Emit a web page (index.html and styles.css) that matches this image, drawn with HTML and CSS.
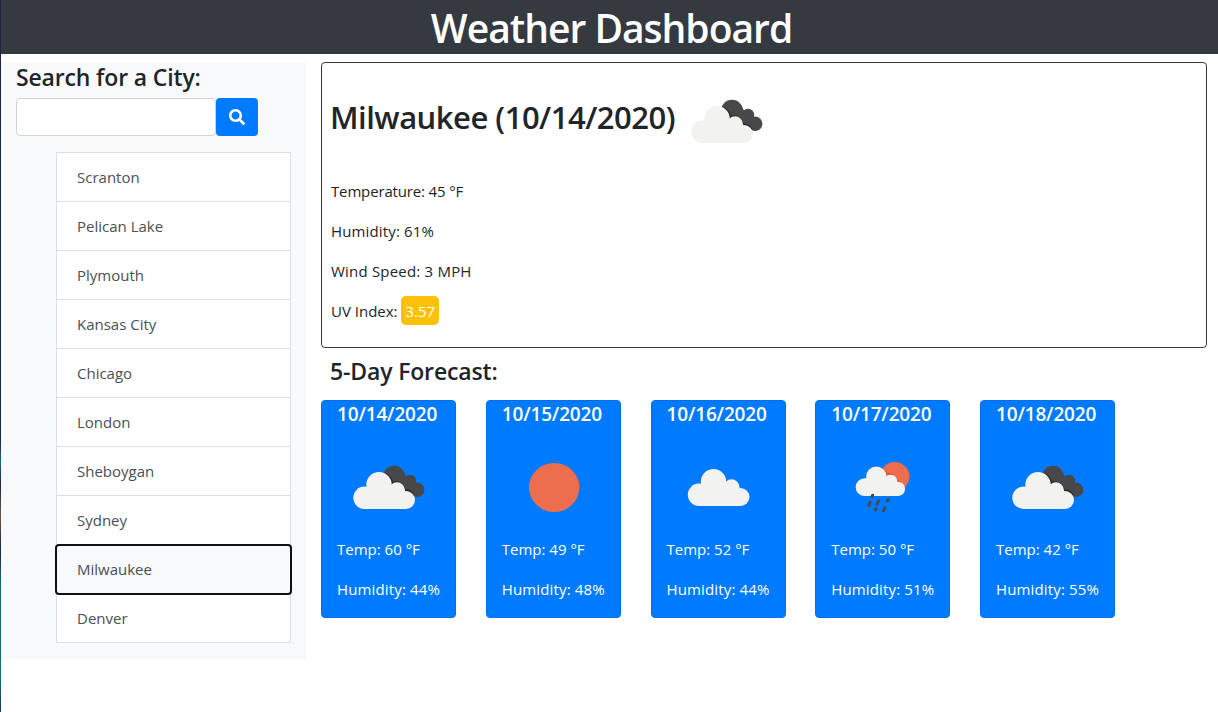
FILE: index.html
```html
<!DOCTYPE html>
<html lang="en">
<head>
<meta charset="utf-8">
<title>Weather Dashboard</title>
<link rel="stylesheet" href="styles.css">
</head>
<body>
<svg class="defs" width="0" height="0" aria-hidden="true">
  <defs>
    <g id="cloud">
      <circle cx="42" cy="47.7" r="12.7"/>
      <circle cx="27.5" cy="60.8" r="11.2"/>
      <circle cx="60" cy="53.3" r="8"/>
      <circle cx="69" cy="63" r="9"/>
      <path d="M27.5 72V50H60L69 60V72Z"/>
    </g>
    <g id="broken">
      <g fill="#48484a"><circle cx="57" cy="39.7" r="11"/><circle cx="73" cy="43.9" r="6.2"/><circle cx="80.2" cy="52.8" r="7.2"/><path d="M57 39L66 34.500L69 39.500L73 43L77 48L80 59.800L66 53Z"/></g>
      <path d="M48.5 36.500Q54 40 55.500 45.500Q65 43.500 68 53Q74 53 76.500 58" fill="none" stroke="#29292c" stroke-width="1.6"/>
      <use href="#cloud" fill="#f2f2f0"/>
    </g>
  </defs>
</svg>
<div class="page">
  <header class="header"><h1>Weather Dashboard</h1></header>
  <div class="row">
    <aside class="sidebar">
      <h4>Search for a City:</h4>
      <form class="search">
        <input type="text" aria-label="City">
        <button type="button" aria-label="Search"><svg width="16" height="16" viewBox="0 0 512 512"><path fill="#fff" d="M505 442.700L405.300 343c-4.500-4.500-10.600-7-17-7H372c27.600-35.300 44-79.700 44-128C416 93.100 322.900 0 208 0S0 93.100 0 208s93.100 208 208 208c48.300 0 92.700-16.400 128-44v16.300c0 6.400 2.500 12.500 7 17l99.700 99.700c9.400 9.400 24.600 9.400 33.900 0l28.300-28.300c9.400-9.400 9.400-24.600.100-34zM208 336c-70.700 0-128-57.200-128-128 0-70.700 57.200-128 128-128 70.700 0 128 57.200 128 128 0 70.700-57.200 128-128 128z"/></svg></button>
      </form>
      <ul class="cities">
        <li>Scranton</li>
        <li>Pelican Lake</li>
        <li>Plymouth</li>
        <li>Kansas City</li>
        <li>Chicago</li>
        <li>London</li>
        <li>Sheboygan</li>
        <li>Sydney</li>
        <li class="focused">Milwaukee</li>
        <li>Denver</li>
      </ul>
    </aside>
    <main class="main">
      <section class="current">
        <h2><span class="place">Milwaukee (10/14/2020)</span><svg class="icon" viewBox="0 0 100 100"><use href="#broken"/></svg></h2>
        <p class="temperature">Temperature: 45 °F</p>
        <p class="humidity">Humidity: 61%</p>
        <p class="wind">Wind Speed: 3 MPH</p>
        <p>UV Index: <span class="uv">3.57</span></p>
      </section>
      <h4 class="forecast-title">5-Day Forecast:</h4>
      <section class="forecast">
        <article class="day"><h5>10/14/2020</h5><svg class="icon" viewBox="0 0 100 100"><use href="#broken"/></svg><p>Temp: 60 °F</p><p class="humidity">Humidity: 44%</p></article>
        <article class="day"><h5>10/15/2020</h5><svg class="icon" viewBox="0 0 100 100"><ellipse cx="52.200" cy="50.500" rx="25.200" ry="24.500" fill="#ec6e4c"/></svg><p>Temp: 49 °F</p><p class="humidity">Humidity: 48%</p></article>
        <article class="day"><h5>10/16/2020</h5><svg class="icon" viewBox="0 0 100 100"><use href="#cloud" fill="#f2f2f0" transform="translate(4.500 -3)"/></svg><p>Temp: 52 °F</p><p class="humidity">Humidity: 44%</p></article>
        <article class="day"><h5>10/17/2020</h5><svg class="icon" viewBox="0 0 100 100"><g transform="translate(1 0)"><circle cx="62.700" cy="39.600" r="14.700" fill="#ec6e4c"/><path d="M53 36.500Q61 35 64 43.500Q69 44 71 49" fill="none" stroke="#e04e36" stroke-width="1.200"/><use href="#cloud" fill="#f2f2f0" transform="translate(10.700 1.500) scale(.8)"/><path d="M40.600 58.200l-.6 1.400M38 65.200l-1.200 3.200M46.500 63.800l-1.500 3.400M56 62.800l-.6 1.200M44 71.800l-.4 1M52.700 70.900l-1.200 2.900" stroke="#48484a" stroke-width="3" stroke-linecap="round"/></g></svg><p>Temp: 50 °F</p><p class="humidity">Humidity: 51%</p></article>
        <article class="day"><h5>10/18/2020</h5><svg class="icon" viewBox="0 0 100 100"><use href="#broken"/></svg><p>Temp: 42 °F</p><p class="humidity">Humidity: 55%</p></article>
      </section>
    </main>
  </div>
</div>
</body>
</html>
```
FILE: styles.css
```css
* { box-sizing: border-box; }
body {
  margin: 0;
  background: linear-gradient(#1d2545 0 440px, #176a77 462px, #1b2444 485px, #6e573f 515px, #1b2444 550px, #176a77 585px 680px, #1b3560 712px);
  font: 15px/24px "Open Sans", "Noto Sans", sans-serif;
  color: #212529;
}
h1, h2, h4, h5, p, ul { margin: 0; }
h1, h2, h4, h5 { font-weight: 600; line-height: 1.2; }
.defs { position: absolute; }
.page { margin-left: 1px; height: 712px; background: #fff; overflow: hidden; }
.header { height: 54px; padding-top: 5px; padding-left: 4px; background: #343a40; color: #fff; text-align: center; }
h1 { font-size: 39px; letter-spacing: -1px; white-space: nowrap; }
.row { display: flex; margin-top: 8px; align-items: flex-start; }
.sidebar { width: 305px; height: 597px; padding: 0 15px; background: #f8f9fa; flex: none; }
h4 { font-size: 23px; letter-spacing: -.15px; line-height: 29px; height: 36px; padding-top: 1px; white-space: nowrap; }
.search { display: flex; height: 38px; margin-bottom: 16px; }
.search input { width: 200px; border: 1px solid #ced4da; border-radius: 4px; background: #fff; padding: 6px 12px; }
.search button { width: 42px; border: 0; border-radius: 4px; background: #007bff; padding: 0; display: flex; align-items: center; justify-content: center; }
.cities { list-style: none; padding: 0 0 0 40px; }
.cities li { height: 49px; padding: 12px 20px; border: 1px solid #dfdfdf; border-bottom: 0; background: #fff; color: #495057; }
.cities li:last-child { height: 50px; border-bottom: 1px solid #dfdfdf; }
.cities .focused { height: 49px; margin: 1px 0 -1px; padding-top: 11px; background: #f8f9fa; outline: 2px solid #101010; outline-offset: -1px; border-color: #f8f9fa; border-radius: 3px; position: relative; }
.main { padding-left: 15px; width: 901px; }
.current { height: 286px; border: 1px solid #343a40; border-radius: 4px; padding: 8px 9px; }
h2 { font-size: 31px; letter-spacing: -.5px; display: flex; align-items: center; height: 108px; padding-bottom: 8px; white-space: nowrap; }
.place { width: 345px; margin-top: -6px; margin-left: -1px; }
.icon { width: 100px; height: 100px; display: block; flex: none; }
.current p { height: 24px; margin-bottom: 16px; }
.temperature { letter-spacing: -.15px; }
.humidity { letter-spacing: .15px; }
.wind { letter-spacing: .2px; }
.uv { display: inline-block; height: 29px; line-height: 30px; margin-top: -5px; vertical-align: middle; padding: 0 4px; border-radius: 5px; background: #ffc107; color: #fff; }
.forecast-title { margin-top: 8px; padding-left: 9px; height: 44px; }
.forecast { display: flex; gap: 29.750px; }
.day { width: 135px; height: 218px; padding: 1px 16px; border: 1px solid #0070e6; padding-left: 15px; border-radius: 4px; background: #007bff; color: #fff; white-space: nowrap; }
.day h5 { font-size: 19px; letter-spacing: -.15px; line-height: 24px; height: 35px; }
.day p { margin-bottom: 16px; }
```
